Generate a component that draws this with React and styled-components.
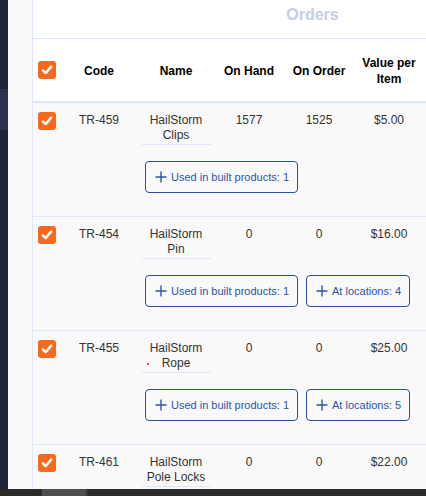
import React from "react"
import styled, { createGlobalStyle, css } from "styled-components"

const GlobalStyle = createGlobalStyle`
  html, body {
    margin: 0;
    padding: 0;
    overflow: hidden;
  }
  body {
    font-family: "Liberation Sans", Arial, sans-serif;
  }
`

const columns = "31px 70px 84px 62px 78px 62px 1fr"
const lineColor = "#dfe6f7"

const Screen = styled.div`
  height: 496px;
  display: flex;
  flex-direction: column;
`

const Workspace = styled.div`
  flex: 1;
  display: flex;
  overflow: hidden;
`

const NavRail = styled.div`
  width: 8px;
  background: #1f2339;
  display: flex;
  flex-direction: column;
`

const NavHighlight = styled.div`
  margin-top: 89px;
  height: 41px;
  background: #2e3250;
`

const Gutter = styled.div`
  width: 24px;
  background: #fafafa;
`

const TablePanel = styled.div`
  flex: 1;
  border-left: 1px solid ${lineColor};
  background: #fff;
  overflow: hidden;
`

const TitleBar = styled.div`
  height: 39px;
  box-sizing: border-box;
  border-bottom: 1px solid ${lineColor};
  padding: 6px 0 0 166px;
  display: flex;
  justify-content: center;
`

const Title = styled.h2`
  margin: 0;
  font-size: 16px;
  line-height: 18px;
  font-weight: 700;
  color: #c5cee4;
`

const HeaderRow = styled.div`
  display: grid;
  grid-template-columns: ${columns};
  height: 62px;
  align-items: center;
  border-bottom: 2px solid ${lineColor};
`

const HeadCell = styled.div`
  text-align: center;
  font-size: 12px;
  line-height: 16px;
  font-weight: 700;
  color: #000;
  padding-top: 2px;
`

const Row = styled.div`
  display: grid;
  grid-template-columns: ${columns};
  align-items: start;
  background: #f9f9f9;
  padding: 9px 0 23px;
  border-bottom: 1px solid ${lineColor};
`

const CheckCell = styled.div`
  padding-left: 5px;
  display: flex;
  align-items: center;
`

const Cell = styled.div`
  margin-top: 1px;
  text-align: center;
  font-size: 12px;
  line-height: 15px;
  color: #333;
`

const NameText = styled.div`
  position: relative;
  width: 69px;
  margin: 0 auto;
  padding-bottom: 1px;
  border-bottom: 1px solid ${lineColor};

  ${({ marked }) =>
    marked &&
    css`
      &::before {
        content: "";
        position: absolute;
        left: 5px;
        top: 22px;
        width: 2px;
        height: 2px;
        border-radius: 1px;
        background: #e3262b;
      }
    `}
`

const Actions = styled.div`
  grid-column: 3 / -1;
  display: flex;
  gap: 8px;
  padding-left: 11px;
  margin-top: 16px;
`

const LinkButton = styled.button`
  height: 32px;
  display: flex;
  align-items: center;
  gap: 4px;
  padding: 0 8px 0 9px;
  background: transparent;
  border: 1px solid #2b4f9c;
  border-radius: 4px;
  color: #2d54a3;
  font-family: "Liberation Sans", Arial, sans-serif;
  font-size: 11px;
  white-space: nowrap;
  cursor: pointer;
`

const Box = styled.span`
  width: 18px;
  height: 18px;
  border-radius: 3px;
  background: #f76a1d;
  display: flex;
  align-items: center;
  justify-content: center;
`

const BottomBar = styled.div`
  height: 7px;
  display: flex;
  background: #2b2a29;
`

const BarSpacer = styled.div`
  width: 42px;
`

const BarItem = styled.div`
  width: 44px;
  background: #4e4e4d;
  border-right: 2px solid #383837;
`

function Checkbox() {
  return (
    <Box>
      <svg width="12" height="12" viewBox="0 0 12 12">
        <path
          d="M1.8 6.4 L4.6 9.1 L10.2 2.6"
          fill="none"
          stroke="#fff"
          strokeWidth="2.4"
          strokeLinecap="round"
          strokeLinejoin="round"
        />
      </svg>
    </Box>
  )
}

function PlusIcon() {
  return (
    <svg width="12" height="12" viewBox="0 0 12 12">
      <path d="M6 0.5 V11.5 M0.5 6 H11.5" stroke="currentColor" strokeWidth="1.4" />
    </svg>
  )
}

const items = [
  { code: "TR-459", name: "HailStorm Clips", hand: "1577", order: "1525", value: "$5.00", built: 1 },
  { code: "TR-454", name: "HailStorm Pin", hand: "0", order: "0", value: "$16.00", built: 1, locations: 4 },
  { code: "TR-455", name: "HailStorm Rope", hand: "0", order: "0", value: "$25.00", built: 1, locations: 5, marked: true },
  { code: "TR-461", name: "HailStorm Pole Locks", hand: "0", order: "0", value: "$22.00", built: 1, locations: 2 },
]

export default function App() {
  return (
    <Screen>
      <GlobalStyle />
      <Workspace>
        <NavRail>
          <NavHighlight />
        </NavRail>
        <Gutter />
        <TablePanel>
          <TitleBar>
            <Title>Orders</Title>
          </TitleBar>
          <HeaderRow>
            <CheckCell>
              <Checkbox />
            </CheckCell>
            <HeadCell>Code</HeadCell>
            <HeadCell>Name</HeadCell>
            <HeadCell>On Hand</HeadCell>
            <HeadCell>On Order</HeadCell>
            <HeadCell>Value per Item</HeadCell>
          </HeaderRow>
          {items.map(item => (
            <Row key={item.code}>
              <CheckCell>
                <Checkbox />
              </CheckCell>
              <Cell>{item.code}</Cell>
              <Cell>
                <NameText marked={item.marked}>{item.name}</NameText>
              </Cell>
              <Cell>{item.hand}</Cell>
              <Cell>{item.order}</Cell>
              <Cell>{item.value}</Cell>
              <Actions>
                <LinkButton>
                  <PlusIcon />
                  Used in built products: {item.built}
                </LinkButton>
                {item.locations && (
                  <LinkButton>
                    <PlusIcon />
                    At locations: {item.locations}
                  </LinkButton>
                )}
              </Actions>
            </Row>
          ))}
        </TablePanel>
      </Workspace>
      <BottomBar>
        <BarSpacer />
        <BarItem />
      </BottomBar>
    </Screen>
  )
}
